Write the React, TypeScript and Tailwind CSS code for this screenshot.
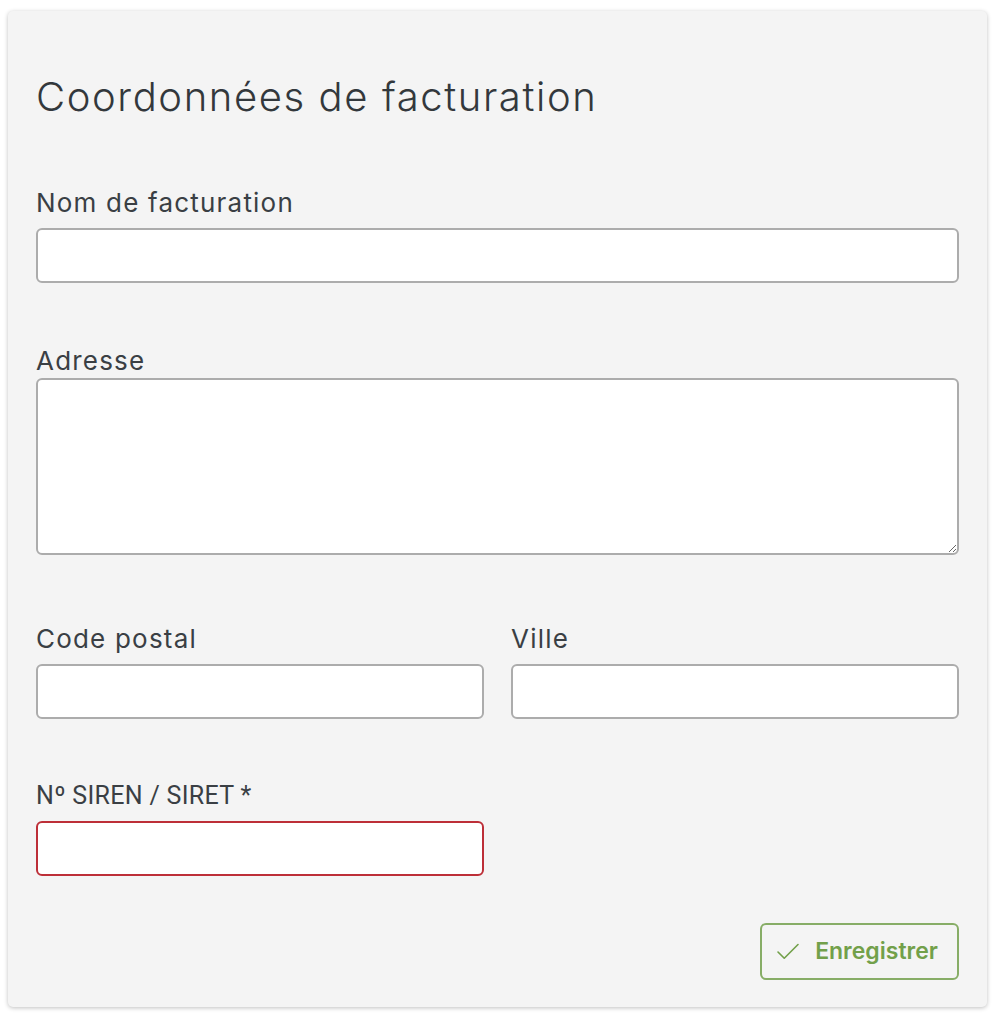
import { Check } from "lucide-react";

const inputCls =
    "block w-full h-[55px] bg-white border-2 border-[#acacac] rounded-[6px] outline-none px-3";

const labelCls = "block text-[26px] leading-[32px] tracking-[1.2px] text-[#3a3f44]";

const App: React.FC = () => {
    return (
        <div className="min-h-screen bg-white pt-[11px] px-2 font-['Inter',sans-serif]">
            <div className="w-[979px] bg-[#f4f4f4] rounded-[5px] shadow-[0_1px_4px_rgba(0,0,0,0.25)] px-[28px] pt-[62px] pb-[27px]">
                <h1 className="text-[40px] leading-[48px] font-light text-[#33383c] tracking-[1.6px]">
                    Coordonnées de facturation
                </h1>

                <div className="mt-[66px]">
                    <label className={labelCls + " mb-[9px]"}>Nom de facturation</label>
                    <input type="text" className={inputCls + " h-[54px]"} />
                </div>

                <div className="mt-[62px]">
                    <label className={labelCls + " mb-[1px]"}>Adresse</label>
                    <textarea className="block w-full h-[177px] bg-white border-2 border-[#acacac] rounded-[6px] outline-none px-3 py-2" />
                </div>

                <div className="mt-[68px] grid grid-cols-2 gap-[27px]">
                    <div>
                        <label className={labelCls + " mb-[9px]"}>Code postal</label>
                        <input type="text" className={inputCls} />
                    </div>
                    <div>
                        <label className={labelCls + " mb-[9px]"}>Ville</label>
                        <input type="text" className={inputCls} />
                    </div>
                </div>

                <div className="mt-[61px] grid grid-cols-2 gap-[27px]">
                    <div>
                        <label className="block text-[25px] leading-[32px] tracking-[0.3px] text-[#3a3f44] mb-[9px] font-['Roboto',sans-serif]">
                            Nº SIREN / SIRET *
                        </label>
                        <input
                            type="text"
                            className="block w-full h-[55px] bg-white border-2 border-[#bd2f38] rounded-[6px] outline-none px-3"
                        />
                    </div>
                </div>

                <div className="mt-[47px] flex justify-end">
                    <button className="h-[57px] w-[199px] flex items-center justify-center gap-[12px] border-2 border-[#87ad66] rounded-[6px] text-[#72a04a] text-[23px] font-semibold">
                        <Check className="w-[30px] h-[30px] -ml-2" strokeWidth={1.3} />
                        Enregistrer
                    </button>
                </div>
            </div>
        </div>
    );
};

export default App;
